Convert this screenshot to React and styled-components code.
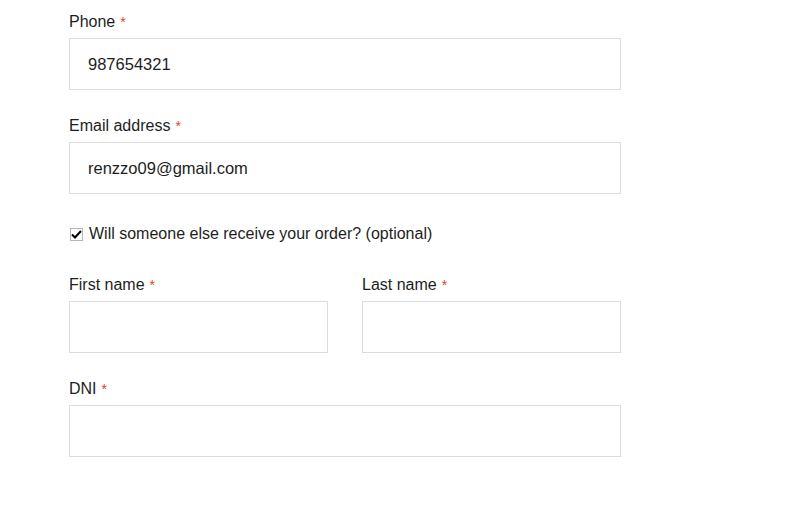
import React from "react";
import styled, { createGlobalStyle } from "styled-components";

const Global = createGlobalStyle`
  html, body { margin: 0; padding: 0; background: #fff; }
  body { font-family: "Liberation Sans", Arial, sans-serif; color: #1e1e1e; }
`;

const Form = styled.form`
  width: 552px;
  margin-left: 69px;
  padding-top: 10px;
  display: flex;
  flex-direction: column;
`;

const Field = styled.div`
  display: flex;
  flex-direction: column;
  gap: 4px;
  margin-bottom: ${(p) => p.$mb || 24}px;
  flex: 1;
`;

const Label = styled.label`
  font-size: 16px;
  line-height: 24px;
  color: #1e1e1e;
`;

const Req = styled.abbr`
  color: #e2401c;
  text-decoration: none;
  font-size: 14px;
  margin-left: 5px;
  border: none;
`;

const Input = styled.input`
  box-sizing: border-box;
  height: 52px;
  width: 100%;
  border: 1px solid #dcdcdc;
  border-radius: 0;
  padding: 0 18px;
  font-family: "Liberation Sans", Arial, sans-serif;
  font-size: 16.5px;
  color: #1e1e1e;
  background: #fff;
  outline: none;
`;

const CheckRow = styled.label`
  display: flex;
  align-items: center;
  gap: 6px;
  font-size: 16px;
  line-height: 24px;
  margin-top: 4px;
  margin-bottom: 27px;
  margin-left: 1px;
`;

const Box = styled.span`
  box-sizing: border-box;
  width: 13px;
  height: 13px;
  border: 1px solid #b5b5b5;
  background: #fff;
  display: flex;
  align-items: center;
  justify-content: center;
`;

const Row = styled.div`
  display: flex;
  gap: 34px;
`;

function FieldBlock({ label, value, mb }) {
  return (
    <Field $mb={mb}>
      <Label>
        {label}
        <Req title="required">*</Req>
      </Label>
      <Input defaultValue={value} />
    </Field>
  );
}

export default function App() {
  return (
    <>
      <Global />
      <Form onSubmit={(e) => e.preventDefault()}>
        <FieldBlock label="Phone" value="987654321" />
        <FieldBlock label="Email address" value="renzzo09@gmail.com" />
        <CheckRow>
          <Box>
            <svg width="11" height="9" viewBox="0 0 11 9">
              <path d="M1 4.5 L4 7.5 L10 1" fill="none" stroke="#000" strokeWidth="2" />
            </svg>
          </Box>
          Will someone else receive your order? (optional)
        </CheckRow>
        <Row>
          <FieldBlock label="First name" value="" />
          <FieldBlock label="Last name" value="" />
        </Row>
        <FieldBlock label="DNI" value="" />
      </Form>
    </>
  );
}
